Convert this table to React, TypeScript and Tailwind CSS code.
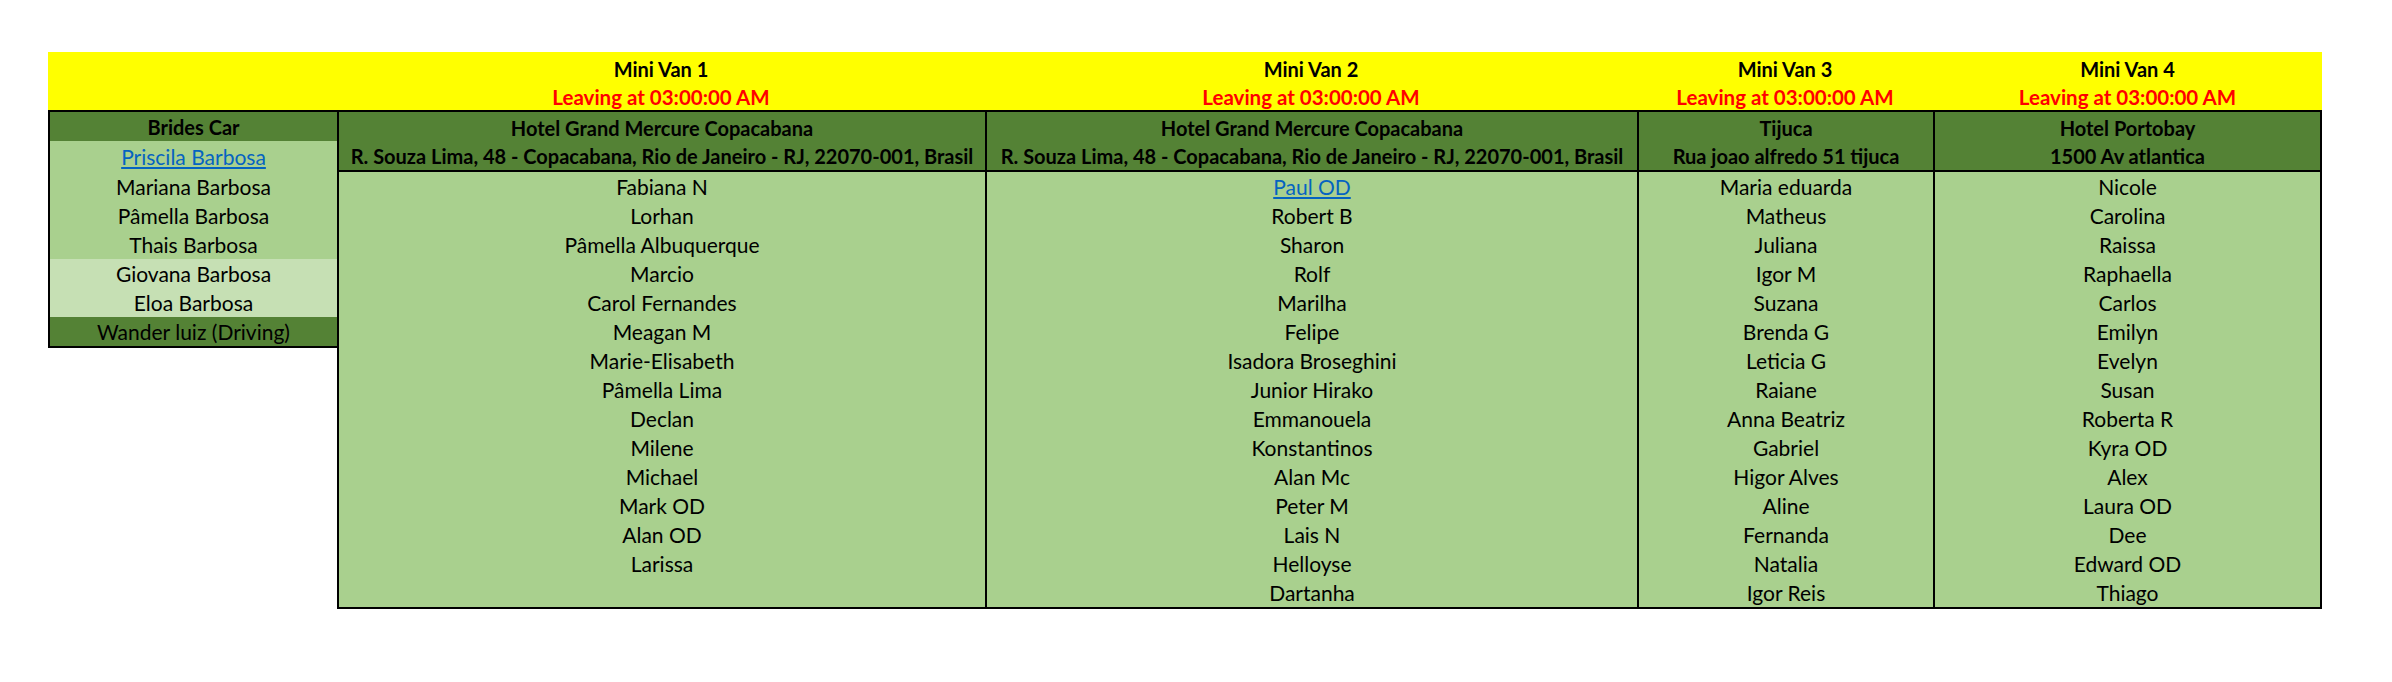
const vans = [
  {
    title: 'Mini Van 1',
    width: 'w-[646px]',
    bandWidth: 'w-[648px]',
    place: 'Hotel Grand Mercure Copacabana',
    address: 'R. Souza Lima, 48 - Copacabana, Rio de Janeiro - RJ, 22070-001, Brasil',
    people: [
      'Fabiana N',
      'Lorhan',
      'Pâmella Albuquerque',
      'Marcio',
      'Carol Fernandes',
      'Meagan M',
      'Marie-Elisabeth',
      'Pâmella Lima',
      'Declan',
      'Milene',
      'Michael',
      'Mark OD',
      'Alan OD',
      'Larissa',
    ],
  },
  {
    title: 'Mini Van 2',
    width: 'w-[650px]',
    bandWidth: 'w-[652px]',
    place: 'Hotel Grand Mercure Copacabana',
    address: 'R. Souza Lima, 48 - Copacabana, Rio de Janeiro - RJ, 22070-001, Brasil',
    people: [
      'Paul OD',
      'Robert B',
      'Sharon',
      'Rolf',
      'Marilha',
      'Felipe',
      'Isadora Broseghini',
      'Junior Hirako',
      'Emmanouela',
      'Konstantinos',
      'Alan Mc',
      'Peter M',
      'Lais N',
      'Helloyse',
      'Dartanha',
    ],
    link: 'Paul OD',
  },
  {
    title: 'Mini Van 3',
    width: 'w-[294px]',
    bandWidth: 'w-[296px]',
    place: 'Tijuca',
    address: 'Rua joao alfredo 51 tijuca',
    people: [
      'Maria eduarda',
      'Matheus',
      'Juliana',
      'Igor M',
      'Suzana',
      'Brenda G',
      'Leticia G',
      'Raiane',
      'Anna Beatriz',
      'Gabriel',
      'Higor Alves',
      'Aline',
      'Fernanda',
      'Natalia',
      'Igor Reis',
    ],
  },
  {
    title: 'Mini Van 4',
    width: 'w-[385px]',
    bandWidth: 'w-[389px]',
    place: 'Hotel Portobay',
    address: '1500 Av atlantica',
    people: [
      'Nicole',
      'Carolina',
      'Raissa',
      'Raphaella',
      'Carlos',
      'Emilyn',
      'Evelyn',
      'Susan',
      'Roberta R',
      'Kyra OD',
      'Alex',
      'Laura OD',
      'Dee',
      'Edward OD',
      'Thiago',
    ],
  },
];

const brides = [
  { name: 'Mariana Barbosa', bg: 'bg-[#a9d08e]' },
  { name: 'Pâmella Barbosa', bg: 'bg-[#a9d08e]' },
  { name: 'Thais Barbosa', bg: 'bg-[#a9d08e]' },
  { name: 'Giovana Barbosa', bg: 'bg-[#c6e0b4]' },
  { name: 'Eloa Barbosa', bg: 'bg-[#c6e0b4]' },
  { name: 'Wander luiz (Driving)', bg: 'bg-[#548235]' },
];

export default function App() {
  return (
    <div className="h-[682px] w-[2392px] bg-white pl-[48px] pt-[52px] font-['Lato',sans-serif] text-[21px] text-black">
      {/* yellow band */}
      <div className="flex h-[58px] w-[2274px] bg-[#ffff00] font-bold">
        <div className="w-[289px]" />
        {vans.map((van) => (
          <div key={van.title} className={`${van.bandWidth} flex flex-col`}>
            <div className="flex h-[29px] items-center justify-center pt-[4px] text-[20px]">{van.title}</div>
            <div className="flex h-[29px] items-center justify-center pt-[4px] text-[20.5px] text-[#ff0000]">
              Leaving at 03:00:00 AM
            </div>
          </div>
        ))}
      </div>

      <div className="flex items-start">
        {/* brides car */}
        <div className="w-[289px] border-2 border-r-0 border-black">
          <div className="flex h-[29px] items-center justify-center bg-[#548235] text-[20px] font-bold">Brides Car</div>
          <div className="flex h-[31px] items-center justify-center bg-[#a9d08e]">
            <span className="text-[#0563c1] underline underline-offset-2">Priscila Barbosa</span>
          </div>
          {brides.map((b) => (
            <div key={b.name} className={`flex h-[29px] items-center justify-center ${b.bg}`}>
              {b.name}
            </div>
          ))}
        </div>

        {/* vans */}
        <div className="flex w-[1985px] border-2 border-black">
          {vans.map((van, i) => (
            <div key={van.title} className={`${van.width} ${i > 0 ? 'border-l-2 border-black' : ''} box-content`}>
              <div className="h-[58px] bg-[#548235] text-[20px] font-bold">
                <div className="flex h-[29px] items-center justify-center pt-[2px]">{van.place}</div>
                <div className="flex h-[29px] items-center justify-center">{van.address}</div>
              </div>
              <div className="box-content h-[435px] border-t-2 border-black bg-[#a9d08e]">
                {van.people.map((p) => (
                  <div key={p} className="flex h-[29px] items-center justify-center">
                    {p === van.link ? (
                      <span className="text-[#0563c1] underline underline-offset-2">{p}</span>
                    ) : (
                      p
                    )}
                  </div>
                ))}
              </div>
            </div>
          ))}
        </div>
      </div>
    </div>
  );
}
